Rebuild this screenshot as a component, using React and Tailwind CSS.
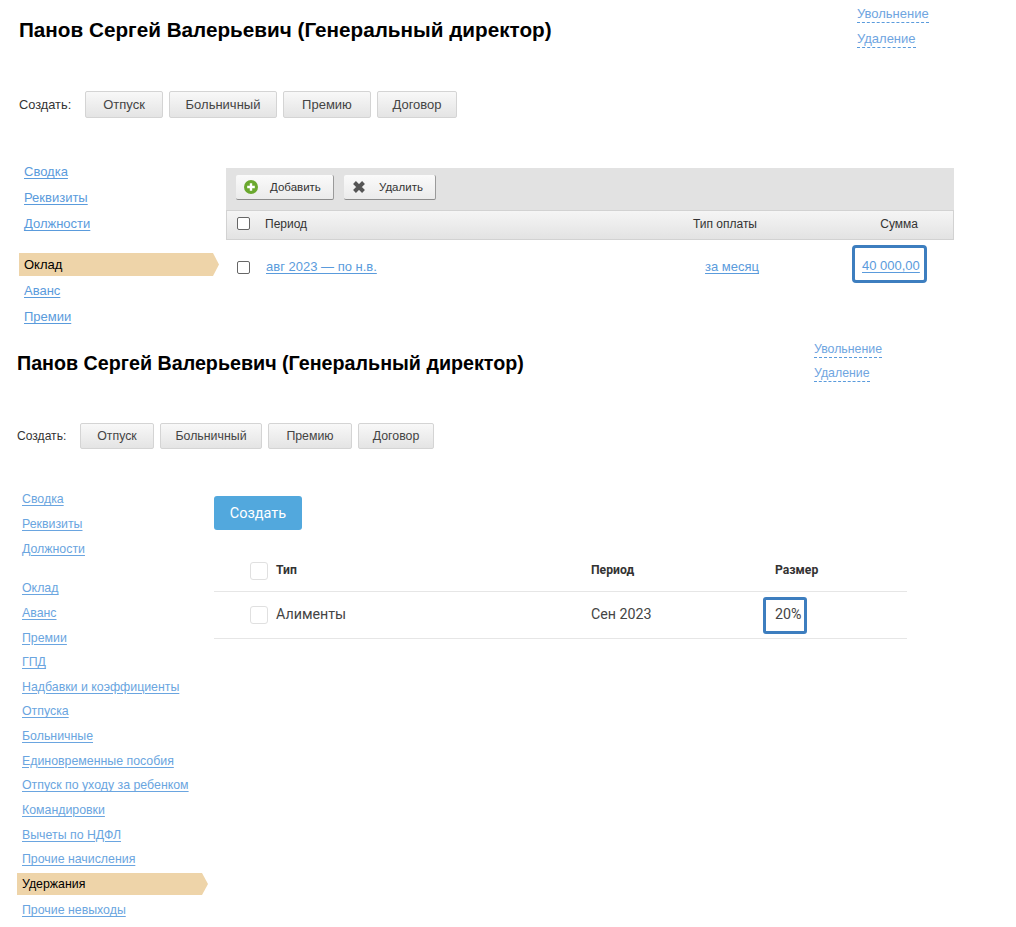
const firstLinks = ['Сводка', 'Реквизиты', 'Должности']
const secondLinks = [
  'Оклад',
  'Аванс',
  'Премии',
  'ГПД',
  'Надбавки и коэффициенты',
  'Отпуска',
  'Больничные',
  'Единовременные пособия',
  'Отпуск по уходу за ребенком',
  'Командировки',
  'Вычеты по НДФЛ',
  'Прочие начисления',
]

const linkClass = 'text-[#5a9bdc] underline underline-offset-2'
const softLinkClass = 'text-[#6aa5e0] underline underline-offset-2'
const dashClass = 'border-b border-dashed border-[#5a9bdc] text-[#6fa5df] leading-[16px]'
const createClass =
  'flex h-full items-center justify-center rounded-[2px] border border-[#d4d4d4] bg-gradient-to-b from-[#f8f8f8] to-[#e4e4e4] text-[#444]'

const ToolButton = ({ width, icon, textClass, children }) => (
  <button
    type="button"
    className={`flex h-[25px] items-center rounded-[2px] border-r border-b border-r-[#9a9a9a] border-b-[#8c8c8c] bg-gradient-to-b from-[#fafafa] to-[#ebebeb] text-[11.5px] text-[#333] ${width}`}
  >
    {icon}
    <span className={`mt-px ${textClass}`}>{children}</span>
  </button>
)

const FirstBlock = () => (
  <div className="text-[13px] text-[#333]">
    <div className="flex h-[91px]">
      <h1 className="mt-[18px] ml-[19px] w-[838px] shrink-0 text-[20.7px] leading-[24px] font-bold text-black">
        Панов Сергей Валерьевич (Генеральный директор)
      </h1>
      <div className="flex flex-col items-start pt-[6px]">
        <span className={dashClass}>Увольнение</span>
        <span className={`mt-[8px] ${dashClass}`}>Удаление</span>
      </div>
    </div>

    <div className="flex h-[27px] items-center pl-[19px]">
      <span className="w-[66px] text-[12.8px]">Создать:</span>
      <div className="flex h-full gap-[6px]">
        <button type="button" className={`w-[78px] ${createClass}`}>Отпуск</button>
        <button type="button" className={`w-[108px] ${createClass}`}>Больничный</button>
        <button type="button" className={`w-[88px] ${createClass}`}>Премию</button>
        <button type="button" className={`w-[80px] ${createClass}`}>Договор</button>
      </div>
    </div>

    <div className="mt-[41px] flex">
      <div className="w-[226px] shrink-0 pl-[19px]">
        {firstLinks.map((item) => (
          <div key={item} className="flex h-[26px] items-center pl-[5px]">
            <a className={linkClass}>{item}</a>
          </div>
        ))}
        <div className="mt-[16px] mb-[2px] flex h-[23px] w-[200px] items-center bg-[#eed4a9] pl-[5px] text-black [clip-path:polygon(0_0,194px_0,100%_50%,194px_100%,0_100%)]">
          Оклад
        </div>
        <div className="flex h-[26px] items-center pl-[5px]">
          <a className={linkClass}>Аванс</a>
        </div>
        <div className="flex h-[26px] items-center pl-[5px]">
          <a className={linkClass}>Премии</a>
        </div>
      </div>

      <div className="mt-[9px] w-[728px] shrink-0">
        <div className="flex h-[42px] gap-[10px] bg-[#e2e2e2] pt-[7px] pl-[10px]">
          <ToolButton
            width="w-[98px]"
            textClass="ml-[12px]"
            icon={
              <svg width="14" height="14" viewBox="0 0 14 14" className="ml-[8px]">
                <circle cx="7" cy="7" r="7" fill="#6aa82e" />
                <path d="M7 3.2v7.6M3.2 7h7.6" stroke="#fff" strokeWidth="2.4" />
              </svg>
            }
          >
            Добавить
          </ToolButton>
          <ToolButton
            width="w-[92px]"
            textClass="ml-[13px]"
            icon={
              <svg width="14" height="14" viewBox="0 0 14 14" className="ml-[8px]">
                <path d="M2.5 2.5l9 9M11.5 2.5l-9 9" stroke="#555" strokeWidth="4" strokeLinecap="butt" />
              </svg>
            }
          >
            Удалить
          </ToolButton>
        </div>
        <div className="flex h-[30px] items-center border border-[#d2d2d2] bg-gradient-to-b from-[#f5f5f5] to-[#e3e3e3] pb-[2px] pl-[10px] text-[12px]">
          <span className="-mt-[2px] size-[13px] rounded-[2px] border border-[#666] bg-white" />
          <span className="ml-[15px] flex-1">Период</span>
          <span>Тип оплаты</span>
          <span className="w-[196px] pr-[35px] text-right">Сумма</span>
        </div>
        <div className="flex items-center pt-[5px] pl-[11px]">
          <span className="mt-[6px] size-[13px] rounded-[2px] border border-[#666] bg-white" />
          <a className={`mt-[6px] ml-[16px] flex-1 ${linkClass}`}>авг 2023 — по н.в.</a>
          <a className={`mt-[6px] ${linkClass}`}>за месяц</a>
          <div className="mr-[27px] ml-[93px] flex h-[38px] w-[75px] shrink-0 items-center rounded-[4px] border-[3px] border-[#3d7ebf] pt-[4px] pl-[7px]">
            <a className={`whitespace-nowrap ${linkClass}`}>40 000,00</a>
          </div>
        </div>
      </div>
    </div>
  </div>
)

const SecondBlock = () => (
  <div className="mt-[7px] text-[12.35px] text-[#333]">
    <div className="flex h-[86px]">
      <h1 className="mt-[15px] ml-[17px] w-[797px] shrink-0 text-[19.7px] leading-[23px] font-bold text-black">
        Панов Сергей Валерьевич (Генеральный директор)
      </h1>
      <div className="flex flex-col items-start pt-[4px]">
        <span className={dashClass}>Увольнение</span>
        <span className={`mt-[7px] ${dashClass}`}>Удаление</span>
      </div>
    </div>

    <div className="flex h-[26px] items-center pl-[17px]">
      <span className="w-[63px] text-[12.1px]">Создать:</span>
      <div className="flex h-full gap-[6px]">
        <button type="button" className={`w-[74px] ${createClass}`}>Отпуск</button>
        <button type="button" className={`w-[102px] ${createClass}`}>Больничный</button>
        <button type="button" className={`w-[84px] ${createClass}`}>Премию</button>
        <button type="button" className={`w-[76px] ${createClass}`}>Договор</button>
      </div>
    </div>

    <div className="mt-[38px] flex">
      <div className="w-[214px] shrink-0 pt-[0.3px] pl-[17px]">
        {firstLinks.map((item) => (
          <div key={item} className="flex h-[24.65px] items-center pl-[5px]">
            <a className={softLinkClass}>{item}</a>
          </div>
        ))}
        <div className="mt-[15px]">
          {secondLinks.map((item) => (
            <div key={item} className="flex h-[24.65px] items-center pl-[5px]">
              <a className={softLinkClass}>{item}</a>
            </div>
          ))}
        </div>
        <div className="mt-[1.2px] mb-[3px] flex h-[22px] w-[191px] items-center bg-[#eed4a9] pl-[5px] text-black [clip-path:polygon(0_0,185px_0,100%_50%,185px_100%,0_100%)]">
          Удержания
        </div>
        <div className="flex h-[24.65px] items-center pl-[5px]">
          <a className={softLinkClass}>Прочие невыходы</a>
        </div>
      </div>

      <div className="mt-[9px] w-[693px] shrink-0 font-['Roboto',sans-serif]">
        <button
          type="button"
          className="flex h-[34px] w-[88px] items-center justify-center rounded-[3px] bg-[#52a8dd] pt-px text-[14.5px] text-white"
        >
          Создать
        </button>
        <div className="mt-[21px] grid h-[41px] grid-cols-[377px_184px_1fr] items-center border-b border-[#e6e6e6] text-[12.2px] font-bold">
          <div className="flex items-center pl-[36px]">
            <span className="size-[18px] rounded-[3px] border border-[#e0e0e0] bg-white" />
            <span className="ml-[8px] -mt-[1px]">Тип</span>
          </div>
          <span className="-mt-[1px]">Период</span>
          <span className="-mt-[1px]">Размер</span>
        </div>
        <div className="grid h-[47px] grid-cols-[377px_184px_1fr] items-center border-b border-[#e6e6e6] text-[14.25px] text-[#444]">
          <div className="flex items-center pl-[36px]">
            <span className="size-[18px] rounded-[3px] border border-[#e0e0e0] bg-white" />
            <span className="ml-[8px]">Алименты</span>
          </div>
          <span>Сен 2023</span>
          <div className="-ml-[12px] flex h-[37px] w-[44px] items-center rounded-[3px] border-[3px] border-[#3d7ebf] pl-[9px]">
            20%
          </div>
        </div>
      </div>
    </div>
  </div>
)

const App = () => (
  <div className="min-h-[927px] w-[1016px] bg-white font-['Liberation_Sans',Arial,sans-serif]">
    <FirstBlock />
    <SecondBlock />
  </div>
)

export default App
